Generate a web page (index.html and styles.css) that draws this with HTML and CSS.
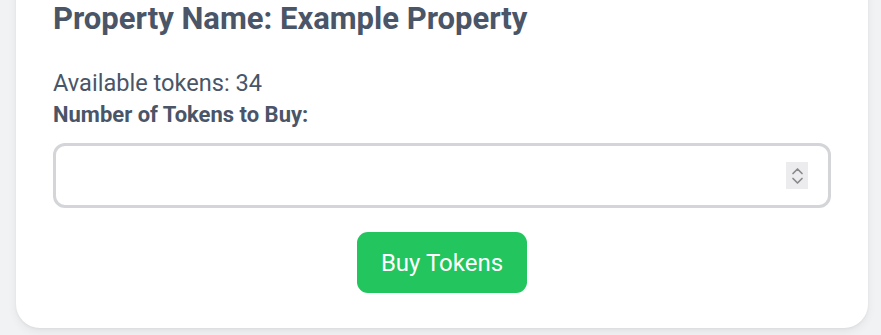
FILE: index.html
```html
<!DOCTYPE html>
<html lang="en">
<head>
<meta charset="utf-8">
<title>Buy Tokens</title>
<link rel="stylesheet" href="styles.css">
</head>
<body>
<div class="page">
  <section class="card">
    <h2 class="title">Property Name: Example Property</h2>
    <p class="available">Available tokens: 34</p>
    <label class="label" for="qty">Number of Tokens to Buy:</label>
    <div class="field">
      <input class="input" id="qty" type="number" min="1" max="34">
      <span class="spin" aria-hidden="true">
        <svg width="13" height="22" viewBox="0 0 13 22"><path d="M2 8.5 L6.5 4 L11 8.5" fill="none" stroke="#8a8a8e" stroke-width="1.7" stroke-linecap="round" stroke-linejoin="round"/><path d="M2 13.5 L6.5 18 L11 13.5" fill="none" stroke="#8a8a8e" stroke-width="1.7" stroke-linecap="round" stroke-linejoin="round"/></svg>
      </span>
    </div>
    <div class="actions">
      <button class="buy" type="button">Buy Tokens</button>
    </div>
  </section>
</div>
</body>
</html>
```
FILE: styles.css
```css
html, body {
  margin: 0;
  padding: 0;
}
body {
  background: #f1f2f4;
  font-family: Roboto, "Liberation Sans", Arial, sans-serif;
  color: #475569;
  overflow: hidden;
}
.page {
  padding: 0 13px 7px 16px;
}
.card {
  margin-top: -40px;
  background: #ffffff;
  border-radius: 24px;
  box-shadow: 0 4px 10px rgba(0, 0, 0, 0.06), 0 1px 3px rgba(0, 0, 0, 0.05);
  padding: 40px 37px 35px;
}
.title {
  margin: 0;
  font-size: 31px;
  line-height: 38px;
  font-weight: 700;
  color: #4a5568;
}
.available {
  margin: 30px 0 0;
  font-size: 23.6px;
  line-height: 30px;
  color: #4a5568;
}
.label {
  display: block;
  margin-top: 3px;
  font-size: 22px;
  line-height: 27px;
  font-weight: 700;
  color: #4a5568;
}
.field {
  position: relative;
  margin-top: 15px;
}
.input {
  display: block;
  box-sizing: border-box;
  width: 100%;
  height: 65px;
  border: 3px solid #d4d5d8;
  border-radius: 12px;
  padding: 0 16px;
  font-family: inherit;
  font-size: 23px;
  color: #4a5568;
  background: #fff;
  outline: none;
  -moz-appearance: textfield;
  appearance: textfield;
}
.input::-webkit-inner-spin-button,
.input::-webkit-outer-spin-button {
  -webkit-appearance: none;
  margin: 0;
}
.spin {
  position: absolute;
  right: 23px;
  top: 19px;
  width: 22px;
  height: 27px;
  background: #ececef;
  display: flex;
  align-items: center;
  justify-content: center;
}
.actions {
  display: flex;
  justify-content: center;
  margin-top: 24px;
}
.buy {
  width: 170px;
  height: 61px;
  border: none;
  border-radius: 11px;
  background: #22c55e;
  color: #ffffff;
  font-family: inherit;
  font-size: 24px;
  cursor: pointer;
}
```
